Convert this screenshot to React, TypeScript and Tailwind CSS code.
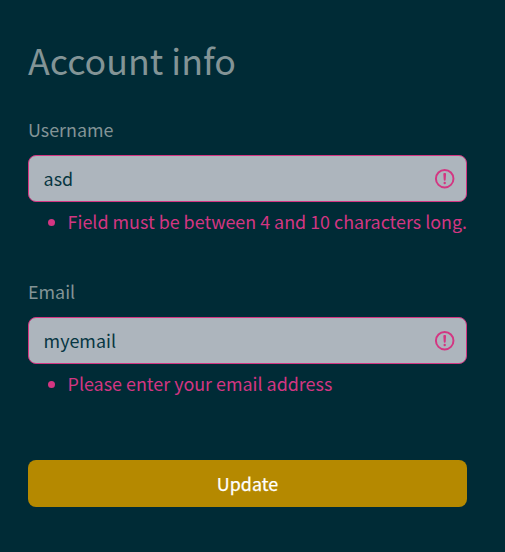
import React from "react";

function InvalidIcon() {
  return (
    <svg
      viewBox="0 0 12 12"
      className="pointer-events-none absolute top-[11.6px] right-[10.8px] size-[23.4px]"
      fill="none"
      stroke="#d33682"
      aria-hidden="true"
    >
      <circle cx="6" cy="6" r="4.5" />
      <path strokeLinejoin="round" d="M5.8 3.6h.4L6 6.5z" />
      <circle cx="6" cy="8.2" r=".6" fill="#d33682" stroke="none" />
    </svg>
  );
}

type FieldProps = { id: string; label: string; value: string; error: string };

function Field({ id, label, value, error }: FieldProps) {
  return (
    <div className="flex h-[162px] flex-col">
      <label htmlFor={id} className="h-[38px] leading-6 text-[#839496]">
        {label}
      </label>
      <div className="relative h-[47px]">
        <input
          id={id}
          defaultValue={value}
          className="block h-full w-full rounded-lg border border-[#d33682] bg-[#adb5bd] pr-11 pb-0.5 pl-[14.6px] text-[#073642] outline-none"
        />
        <InvalidIcon />
      </div>
      <ul className="mt-[6px] pl-5 text-[#d33682]">
        <li className="flex items-center leading-[26px] whitespace-nowrap">
          <span className="mt-[2px] mr-[12.6px] size-[7px] shrink-0 rounded-full bg-[#d33682]" />
          {error}
        </li>
      </ul>
    </div>
  );
}

export default function App() {
  return (
    <main className="min-h-screen bg-[#002b36] pt-9 pr-[38px] pl-7 font-['Noto_Sans_CJK_SC',sans-serif] text-[17.9px]">
      <h1 className="h-[81px] text-[35.8px] leading-[46px] text-[#839496]">Account info</h1>
      <form onSubmit={(e) => e.preventDefault()}>
        <Field
          id="username"
          label="Username"
          value="asd"
          error="Field must be between 4 and 10 characters long."
        />
        <Field id="email" label="Email" value="myemail" error="Please enter your email address" />
        <button
          type="submit"
          className="mt-[19px] block h-[47px] w-full rounded-lg bg-[#b58900] text-white [-webkit-text-stroke:0.25px_white]"
        >
          Update
        </button>
      </form>
    </main>
  );
}
